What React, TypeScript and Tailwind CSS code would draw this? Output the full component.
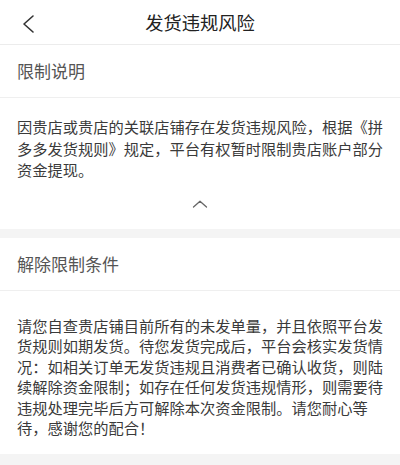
import React from "react";

const font = { fontFamily: '"Noto Sans CJK SC", "Noto Sans", sans-serif' };

function BackIcon() {
  return (
    <svg width="14" height="20" viewBox="0 0 14 20" fill="none">
      <path d="M11 2 L2 10 L11 18" stroke="#333" strokeWidth="1.6" strokeLinecap="round" strokeLinejoin="round" />
    </svg>
  );
}

function ChevronUp() {
  return (
    <svg width="16" height="8" viewBox="0 0 16 8" fill="none">
      <path d="M1.5 7 L8 1.2 L14.5 7" stroke="#666" strokeWidth="1.3" strokeLinecap="round" strokeLinejoin="round" />
    </svg>
  );
}

const limitLines = [
  "因贵店或贵店的关联店铺存在发货违规风险，根据《拼",
  "多多发货规则》规定，平台有权暂时限制贵店账户部分",
  "资金提现。",
];

const releaseLines = [
  "请您自查贵店铺目前所有的未发单量，并且依照平台发",
  "货规则如期发货。待您发货完成后，平台会核实发货情",
  "况：如相关订单无发货违规且消费者已确认收货，则陆",
  "续解除资金限制；如存在任何发货违规情形，则需要待",
  "违规处理完毕后方可解除本次资金限制。请您耐心等",
  "待，感谢您的配合！",
];

export default function App() {
  return (
    <div className="w-[400px] h-[465px] overflow-hidden bg-[#f4f4f4]" style={font}>
      <header className="relative h-[45px] bg-white border-b border-[#ececec] flex items-center justify-center">
        <div className="absolute left-[22px] top-[14px]">
          <BackIcon />
        </div>
        <h1 className="text-[18.3px] text-[#222] leading-none">发货违规风险</h1>
      </header>

      <section className="bg-white">
        <div className="h-[53px] flex items-center px-[17px] border-b border-[#efefef]">
          <span className="text-[17px] text-[#555]">限制说明</span>
        </div>
        <div className="px-[17px] pt-[18px] text-[15.25px] leading-[21.5px] text-[#3a3a3a]">
          {limitLines.map((l) => (
            <div key={l} className="whitespace-nowrap">{l}</div>
          ))}
        </div>
        <div className="h-[48px] flex items-center justify-center pb-[2px]">
          <ChevronUp />
        </div>
      </section>

      <div className="h-[9px]" />

      <section className="bg-white">
        <div className="h-[53px] flex items-center px-[17px] border-b border-[#efefef]">
          <span className="text-[17px] text-[#555]">解除限制条件</span>
        </div>
        <div className="px-[17px] pt-[24px] pb-[16px] text-[15.25px] leading-[20.5px] text-[#3a3a3a]">
          {releaseLines.map((l) => (
            <div key={l} className="whitespace-nowrap">{l}</div>
          ))}
        </div>
      </section>
    </div>
  );
}
